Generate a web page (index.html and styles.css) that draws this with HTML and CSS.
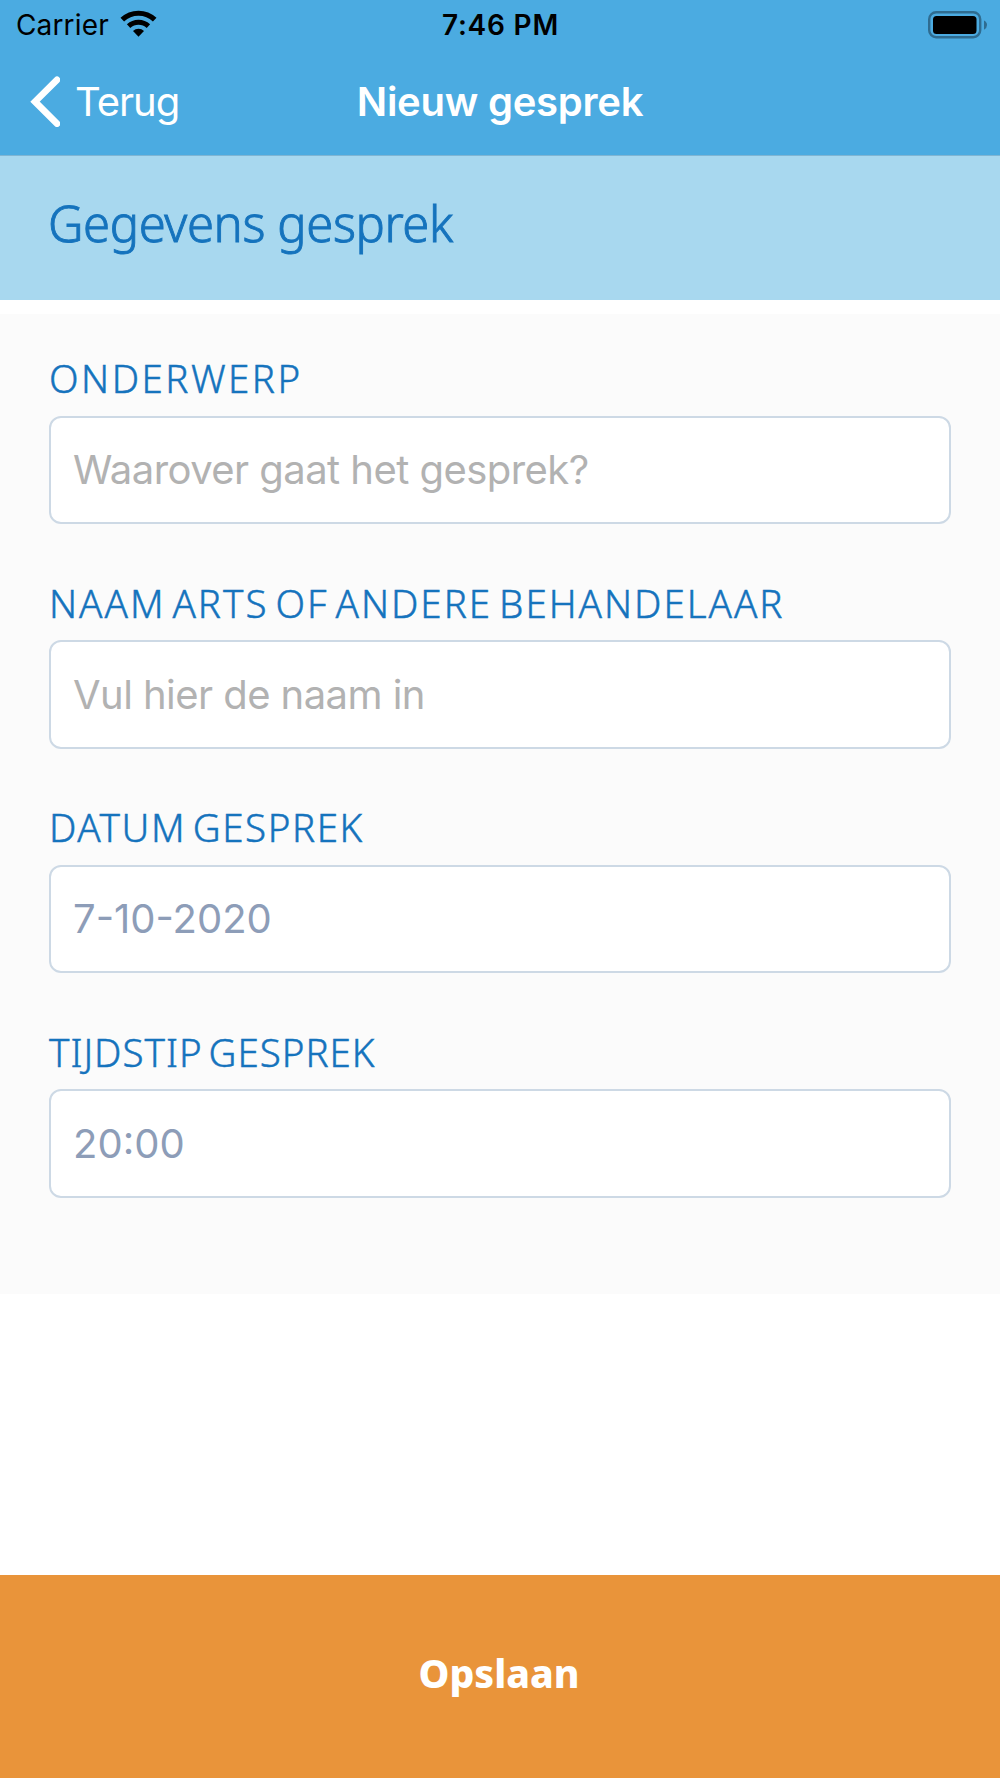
FILE: index.html
```html
<!DOCTYPE html>
<html lang="nl">
  <head>
    <meta charset="UTF-8" />
    <meta name="viewport" content="width=device-width, initial-scale=1.0" />
    <title>Nieuw gesprek</title>
    <link rel="stylesheet" href="styles.css">
  </head>
  <body>
    <div class="header">
      <div class="status-bar">
        <div class="carrier">
          <span class="carrier-name">Carrier</span>
          <svg class="wifi" width="37" height="28" viewBox="0 0 37 28">
            <path d="M2.3 9.7A23.6 23.6 0 0 1 34.7 9.7" fill="none" stroke="#000" stroke-width="5.2" />
            <path d="M8.6 16.2A14.6 14.6 0 0 1 28.4 16.2" fill="none" stroke="#000" stroke-width="5" />
            <path d="M13 20.9A8 8 0 0 1 24 20.9L18.5 26.8Z" />
          </svg>
        </div>
        <span class="time">7:46 PM</span>
        <svg class="battery" width="60" height="28" viewBox="0 0 60 28">
          <rect x="1.2" y="1.2" width="51" height="25" rx="7" fill="none" stroke="#2f6c90" stroke-width="2.4" />
          <rect x="5" y="5" width="43.5" height="18" rx="3.5" />
          <path d="M56 9.5Q59 11 59 14Q59 17 56 18.8Z" fill="#2f6c90" />
        </svg>
      </div>
      <div class="nav-bar">
        <a class="back">
          <svg width="30" height="51" viewBox="0 0 30 51">
            <path d="M27 3.8L5 25.7L27 47.6" fill="none" stroke="#fff" stroke-width="6.6" stroke-linecap="round" />
          </svg>
          <span>Terug</span>
        </a>
        <span class="title">Nieuw gesprek</span>
      </div>
    </div>

    <div class="section-title"><h1>Gegevens gesprek</h1></div>

    <form class="form">
      <div class="field">
        <label class="label subject" for="onderwerp">ONDERWERP</label>
        <input class="input" id="onderwerp" type="text" placeholder="Waarover gaat het gesprek?" />
      </div>
      <div class="field">
        <label class="label name" for="naam">NAAM ARTS OF ANDERE BEHANDELAAR</label>
        <input class="input" id="naam" type="text" placeholder="Vul hier de naam in" />
      </div>
      <div class="field">
        <label class="label date" for="datum">DATUM GESPREK</label>
        <input class="input" id="datum" type="text" value="7-10-2020" />
      </div>
      <div class="field">
        <label class="label hour" for="tijdstip">TIJDSTIP GESPREK</label>
        <input class="input" id="tijdstip" type="text" value="20:00" />
      </div>
    </form>

    <button class="save" type="button">Opslaan</button>
  </body>
</html>
```
FILE: styles.css
```css
* {
  box-sizing: border-box;
}
body {
  font-family: Inter, sans-serif;
  margin: 0;
  height: 1778px;
  display: flex;
  flex-direction: column;
  background-color: #ffffff;
}
.header {
  height: 156px;
  background-color: #4babe1;
  border-bottom: 1px solid #7fb5d3;
}
.status-bar {
  height: 48px;
  padding: 2px 12px 0 16px;
  display: grid;
  grid-template-columns: 1fr auto 1fr;
  align-items: center;
  font-size: 28px;
  color: #000000;
}
.carrier {
  display: flex;
  align-items: center;
  gap: 11px;
}
.carrier-name {
  letter-spacing: 0.15px;
}
.wifi {
  margin-bottom: 3px;
}
.time {
  font-weight: 600;
  letter-spacing: 0.8px;
  margin-right: 3px;
}
.battery {
  justify-self: end;
  margin-bottom: 1px;
}
.nav-bar {
  height: 107px;
  padding: 0 30px;
  display: grid;
  grid-template-columns: 1fr auto 1fr;
  align-items: center;
  font-size: 40px;
  color: #ffffff;
}
.back {
  display: flex;
  align-items: center;
  gap: 15px;
  letter-spacing: -1px;
}
.title {
  font-weight: 600;
  letter-spacing: -0.25px;
}
.section-title {
  height: 144px;
  padding: 0 48px;
  background-color: #a8d8ef;
}
.section-title h1 {
  margin: 0;
  font-family: "Noto Sans", sans-serif;
  font-size: 49px;
  font-weight: 300;
  line-height: 134px;
  letter-spacing: -0.4px;
  color: #1573bd;
  -webkit-text-stroke: 0.9px #1573bd;
}
.form {
  margin-top: 14px;
  height: 980px;
  padding: 41px 49px 0;
  background-color: #fbfbfb;
}
.field {
  height: 224.6px;
  display: flex;
  flex-direction: column;
}
.label {
  height: 60.5px;
  font-family: "Noto Sans", sans-serif;
  font-size: 38.5px;
  font-weight: 300;
  line-height: 46px;
  word-spacing: -5px;
  white-space: nowrap;
  color: #1573bd;
  -webkit-text-stroke: 0.5px #1573bd;
}
.subject {
  letter-spacing: 2.5px;
}
.name {
  letter-spacing: 2px;
}
.date {
  letter-spacing: 1.6px;
}
.hour {
  letter-spacing: 1px;
}
.input {
  width: 100%;
  height: 108.5px;
  padding: 0 22px;
  border: 2px solid #cdd9e5;
  border-radius: 12px;
  background-color: #ffffff;
  font-family: inherit;
  font-size: 40px;
  color: #8d9db8;
}
.input::placeholder {
  color: #b2b2b2;
  letter-spacing: -0.55px;
}
.save {
  margin-top: auto;
  height: 203px;
  padding: 0 2px 8px 0;
  border: none;
  background-color: #e9943a;
  font-family: "Noto Sans", sans-serif;
  font-size: 39px;
  font-weight: 800;
  color: #ffffff;
}
```
